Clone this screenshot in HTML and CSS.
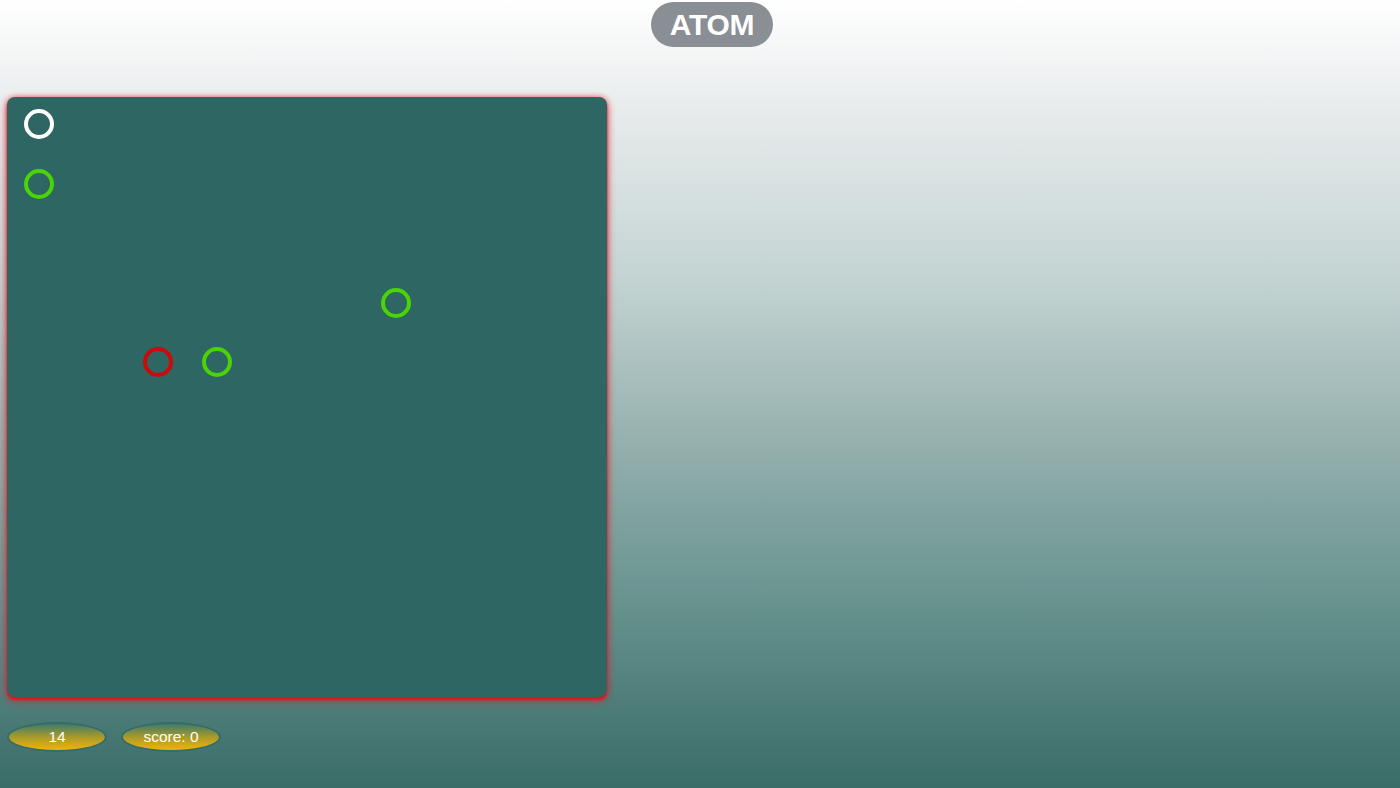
FILE: index.html
```html
<!DOCTYPE html>
<html>
<head>
<meta charset="utf-8">
<title>ATOM</title>
<link rel="stylesheet" href="styles.css">
</head>
<body>
<header class="top">
  <div class="title">ATOM</div>
</header>
<main class="game">
  <div class="board">
    <span class="atom atom-white" style="left:17px;top:12px"></span>
    <span class="atom atom-green" style="left:17px;top:72px"></span>
    <span class="atom atom-green" style="left:374px;top:191px"></span>
    <span class="atom atom-red" style="left:136px;top:250px"></span>
    <span class="atom atom-green" style="left:195px;top:250px"></span>
  </div>
  <div class="stats">
    <div class="pill">14</div>
    <div class="pill">score: 0</div>
  </div>
</main>
</body>
</html>
```

FILE: styles.css
```css
html, body {
  margin: 0;
  padding: 0;
  height: 100%;
}
body {
  min-height: 788px;
  background: linear-gradient(to bottom, #ffffff 0%, #e6eaeb 15%, #c4d4d3 35%, #98b2b0 55%, #6a9591 75%, #3a6c68 100%);
  font-family: "Liberation Sans", Arial, sans-serif;
  overflow: hidden;
}
.top {
  display: flex;
  justify-content: center;
  padding-top: 2px;
  height: 97px;
  box-sizing: border-box;
}
.title {
  width: 122px;
  height: 45px;
  border-radius: 23px;
  background: #8a8f96;
  color: #fff;
  font-weight: bold;
  font-size: 30px;
  line-height: 46px;
  text-align: center;
  letter-spacing: -0.3px;
  margin-left: 24px;
}
.game {
  padding-left: 7px;
}
.board {
  position: relative;
  width: 600px;
  height: 600px;
  border-radius: 8px;
  background: #2e6663;
  box-shadow: 0 3px 2px rgba(220, 20, 35, 0.9), 0 3px 8px rgba(235, 25, 40, 0.8), 0 0 5px rgba(235, 40, 50, 0.55);
}
.atom {
  position: absolute;
  width: 30px;
  height: 30px;
  box-sizing: border-box;
  border-radius: 50%;
  border: 4.5px solid #fff;
}
.atom-white { border-color: #ffffff; }
.atom-green { border-color: #4ad404; }
.atom-red { border-color: #cc0a0a; }
.stats {
  display: flex;
  gap: 14px;
  margin-top: 25px;
  padding-left: 0;
}
.pill {
  width: 100px;
  height: 30px;
  box-sizing: border-box;
  border-radius: 50%;
  border: 2px solid #346c69;
  background: linear-gradient(to bottom, #3f7a6a 0%, #a89a2a 50%, #f2b208 100%);
  color: #fff;
  font-family: "Liberation Sans", Arial, sans-serif;
  font-size: 15.5px;
  line-height: 26px;
  text-align: center;
}
```
